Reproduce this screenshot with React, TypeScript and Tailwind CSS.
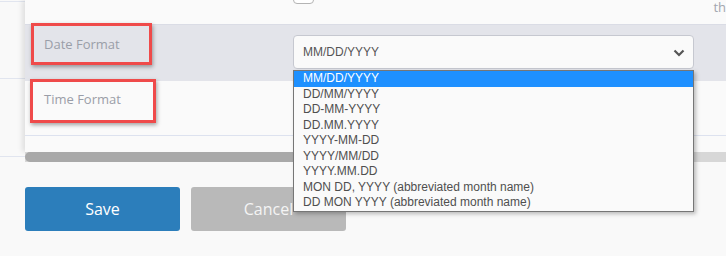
export default function App() {
  const formats = [
    "MM/DD/YYYY",
    "DD/MM/YYYY",
    "DD-MM-YYYY",
    "DD.MM.YYYY",
    "YYYY-MM-DD",
    "YYYY/MM/DD",
    "YYYY.MM.DD",
    "MON DD, YYYY (abbreviated month name)",
    "DD MON YYYY (abbreviated month name)",
  ];

  return (
    <div className="relative w-[726px] h-[256px] overflow-hidden bg-[#f9f9f9] flex font-['Open_Sans',sans-serif]">
      {/* outer table edge on the left */}
      <div className="w-[25px] shrink-0 flex flex-col">
        <div className="h-[2px] border-b border-[#e1e5ef]" />
        <div className="h-[77px] border-b border-[#e1e5ef]" />
        <div className="h-[78px] border-b border-[#e1e5ef]" />
      </div>

      <div className="flex-1 flex flex-col min-w-0">
        {/* settings panel */}
        <div className="h-[152px] bg-[#fafafa] shadow-[-3px_0_5px_rgba(0,0,0,0.10)] flex flex-col">
          <div className="h-[24px] flex">
            <div className="w-[268px] shrink-0" />
            <div className="w-[21px] h-[5px] -mt-[1px] border border-[#b4b4b4] rounded-b-[4px] bg-white" />
            <div className="flex-1 flex justify-end">
              <span className="text-[13px] leading-[14px] text-[#a2a6ae]">th</span>
            </div>
          </div>

          <div className="h-[57px] bg-[#e3e4ea] border-t border-[#dadce5] flex">
            <div className="w-[268px] shrink-0 pl-[19px] pt-[6px]">
              <span className="text-[13px] leading-[20px] text-[#9a9ea8]">Date Format</span>
            </div>
            <div className="pt-[10px]">
              <div className="w-[401px] h-[34px] border border-[#c6c8d0] rounded-[4px] bg-[#fafafa] flex items-center justify-between pl-[9px] pr-[8px]">
                <span className="font-['Liberation_Sans',Arial,sans-serif] text-[12px] text-[#555555]">
                  MM/DD/YYYY
                </span>
                <svg width="12" height="8" viewBox="0 0 12 8" className="mt-[1px]">
                  <polyline points="1.5,1.5 6,6 10.5,1.5" fill="none" stroke="#555" strokeWidth="2.2" />
                </svg>
              </div>
            </div>
          </div>

          <div className="h-[55px] border-b border-[#dde2ef] flex">
            <div className="w-[268px] shrink-0 pl-[19px] pt-[5px]">
              <span className="text-[13px] leading-[20px] text-[#9a9ea8]">Time Format</span>
            </div>
          </div>
        </div>

        {/* horizontal scrollbar */}
        <div className="h-[10px] bg-[#d7d7d7] flex">
          <div className="w-[620px] h-full rounded-full bg-[#a9a9a9]" />
        </div>

        <div className="mt-[25px] flex gap-[11px]">
          <button className="w-[155px] h-[44px] rounded-[3px] bg-[#2c7ebb] text-white text-[16px]">
            Save
          </button>
          <button className="w-[155px] h-[44px] rounded-[3px] bg-[#b9b9b9] text-[#f4f4f4] text-[16px]">
            Cancel
          </button>
        </div>
      </div>

      {/* annotation boxes */}
      <div className="absolute left-[31px] top-[23px] w-[121px] h-[42px] border-[3px] border-[#ef4a4a] shadow-[1px_2px_4px_rgba(0,0,0,0.35)]" />
      <div className="absolute left-[30px] top-[79px] w-[126px] h-[44px] border-[3px] border-[#ef4a4a] shadow-[1px_2px_4px_rgba(0,0,0,0.35)]" />

      {/* open select list */}
      <div className="absolute left-[293px] top-[70px] w-[401px] border border-[#767676] bg-[#fafafa] shadow-[2px_2px_4px_rgba(0,0,0,0.25)] font-['Liberation_Sans',Arial,sans-serif] text-[12px]">
        {formats.map((f, i) => (
          <div
            key={f}
            className={
              i === 0
                ? "h-[15.5px] leading-[15.5px] pl-[9px] bg-[#1e90ff] text-white"
                : "h-[15.5px] leading-[15.5px] pl-[9px] text-[#4f4f4f]"
            }
          >
            {f}
          </div>
        ))}
      </div>
    </div>
  );
}
